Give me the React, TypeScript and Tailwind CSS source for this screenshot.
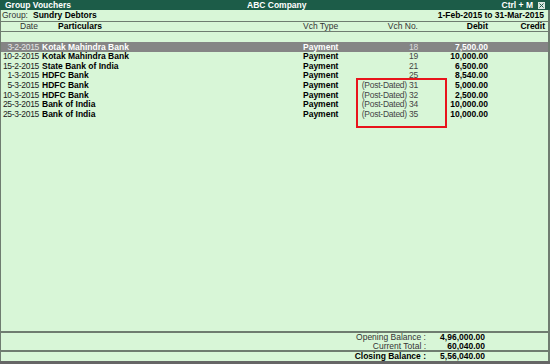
import React from "react";

type Row = {
  date: string;
  name: string;
  type: string;
  no: string;
  debit: string;
  active?: boolean;
};

const rows: Row[] = [
  { date: "3-2-2015", name: "Kotak Mahindra Bank", type: "Payment", no: "18", debit: "7,500.00", active: true },
  { date: "10-2-2015", name: "Kotak Mahindra Bank", type: "Payment", no: "19", debit: "10,000.00" },
  { date: "15-2-2015", name: "State Bank of India", type: "Payment", no: "21", debit: "6,500.00" },
  { date: "1-3-2015", name: "HDFC Bank", type: "Payment", no: "25", debit: "8,540.00" },
  { date: "5-3-2015", name: "HDFC Bank", type: "Payment", no: "(Post-Dated) 31", debit: "5,000.00" },
  { date: "10-3-2015", name: "HDFC Bank", type: "Payment", no: "(Post-Dated) 32", debit: "2,500.00" },
  { date: "25-3-2015", name: "Bank of India", type: "Payment", no: "(Post-Dated) 34", debit: "10,000.00" },
  { date: "25-3-2015", name: "Bank of India", type: "Payment", no: "(Post-Dated) 35", debit: "10,000.00" },
];

const App: React.FC = () => {
  return (
    <div
      className="w-[550px] h-[364px] flex flex-col bg-[#d8f6d7] text-[8.5px] leading-none text-black overflow-hidden whitespace-nowrap"
      style={{ fontFamily: '"Liberation Sans", Arial, sans-serif' }}
    >
      {/* title bar */}
      <div className="h-[10px] flex items-center bg-[#1c5c48] text-white font-bold px-[5px] relative">
        <span>Group Vouchers</span>
        <span className="absolute left-[247px]">ABC Company</span>
        <span className="ml-auto">Ctrl + M</span>
        <svg width="7" height="7" viewBox="0 0 7 7" className="ml-[5px]">
          <rect x="0.5" y="0.5" width="6" height="6" fill="#d8e8e0" stroke="#d8e8e0" />
          <path d="M1.5 1.5 L5.5 5.5 M5.5 1.5 L1.5 5.5" stroke="#1c5c48" strokeWidth="1" />
        </svg>
      </div>

      <div className="flex-1 flex flex-col border-l border-r-2 border-[#6f7c70] relative">
        {/* group row */}
        <div className="h-[12px] flex items-center px-[1px] border-b border-[#6f7c70]">
          <span className="text-[#333]">Group:</span>
          <span className="font-bold ml-[5px]">Sundry Debtors</span>
          <span className="font-bold ml-auto mr-[3px]">1-Feb-2015 to 31-Mar-2015</span>
        </div>

        {/* column header */}
        <div className="h-[10px] flex items-center border-b border-[#6f7c70]">
          <span className="w-[38px] shrink-0 pl-[19px] text-[#333]">Date</span>
          <span className="w-[264px] shrink-0 pl-[19px] font-bold">Particulars</span>
          <span className="w-[50px] shrink-0 text-[#333]">Vch Type</span>
          <span className="w-[65px] shrink-0 text-right text-[#333]">Vch No.</span>
          <span className="w-[70px] shrink-0 text-right font-bold">Debit</span>
          <span className="w-[57px] shrink-0 text-right font-bold">Credit</span>
        </div>

        {/* body */}
        <div className="flex-1 flex flex-col pt-[10px]">
          {rows.map((r, i) => (
            <div
              key={i}
              className={
                "h-[9.6px] flex items-center " +
                (r.active ? "bg-[#858585] text-white" : "")
              }
            >
              <span
                className={
                  "w-[38px] shrink-0 flex justify-end tracking-[-0.3px] " +
                  (r.active ? "text-[#e6e6e6]" : "text-[#222]")
                }
              >
                {r.date}
              </span>
              <span className="w-[264px] shrink-0 pl-[3px] font-bold">{r.name}</span>
              <span className="w-[50px] shrink-0 font-bold">{r.type}</span>
              <span
                className={
                  "w-[65px] shrink-0 text-right tracking-[-0.25px] " +
                  (r.active ? "text-[#dcdcdc]" : "text-[#444]")
                }
              >
                {r.no}
              </span>
              <span className="w-[70px] shrink-0 text-right font-bold">{r.debit}</span>
              <span className="w-[57px] shrink-0" />
            </div>
          ))}
        </div>

        {/* annotation */}
        <div className="absolute left-[355px] top-[68px] w-[91px] h-[50px] border-2 border-[#e8141c]" />

        {/* totals */}
        <div className="h-[19px] border-t-2 border-[#6f7c70] flex flex-col justify-center">
          <div className="h-[8.5px] flex items-center">
            <span className="w-[425px] text-right text-[#333]">Opening Balance :</span>
            <span className="w-[59px] text-right font-bold">4,96,000.00</span>
          </div>
          <div className="h-[8.5px] flex items-center">
            <span className="w-[425px] text-right text-[#333]">Current Total :</span>
            <span className="w-[59px] text-right font-bold">60,040.00</span>
          </div>
        </div>
        <div className="h-[11px] border-t-2 border-[#6f7c70] flex items-center">
          <span className="w-[425px] text-right font-bold">Closing Balance :</span>
          <span className="w-[59px] text-right font-bold">5,56,040.00</span>
        </div>
      </div>
      <div className="h-[3px] bg-[#666]" />
    </div>
  );
};

export default App;
